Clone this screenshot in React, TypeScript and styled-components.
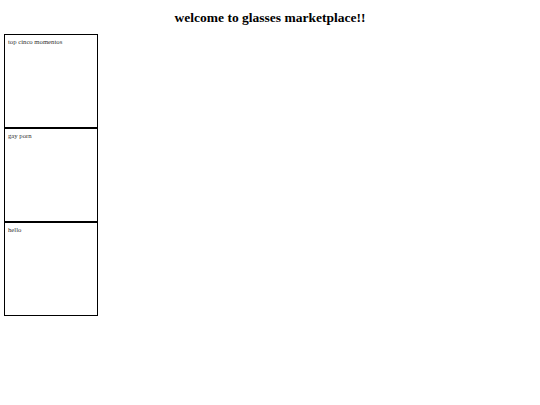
import styled, { createGlobalStyle } from "styled-components";

const Global = createGlobalStyle`
  body {
    margin: 4px;
    font-family: "Liberation Serif", "Times New Roman", serif;
    background: #ffffff;
    color: #000000;
  }
`;

const Title = styled.h1`
  text-align: center;
  font-size: 13.5px;
  font-weight: bold;
  margin: 6px 0 8px;
`;

const List = styled.div`
  display: flex;
  flex-direction: column;
  width: 94px;
`;

const Card = styled.div`
  box-sizing: border-box;
  height: 94px;
  border: 1px solid #000;
  padding: 3px 3px;
  font-size: 6.7px;
  color: #333;
`;

const posts = ["top cinco momentos", "gay porn", "hello"];

function App() {
  return (
    <>
      <Global />
      <Title>welcome to glasses marketplace!!</Title>
      <List>
        {posts.map((p) => (
          <Card key={p}>{p}</Card>
        ))}
      </List>
    </>
  );
}

export default App;
